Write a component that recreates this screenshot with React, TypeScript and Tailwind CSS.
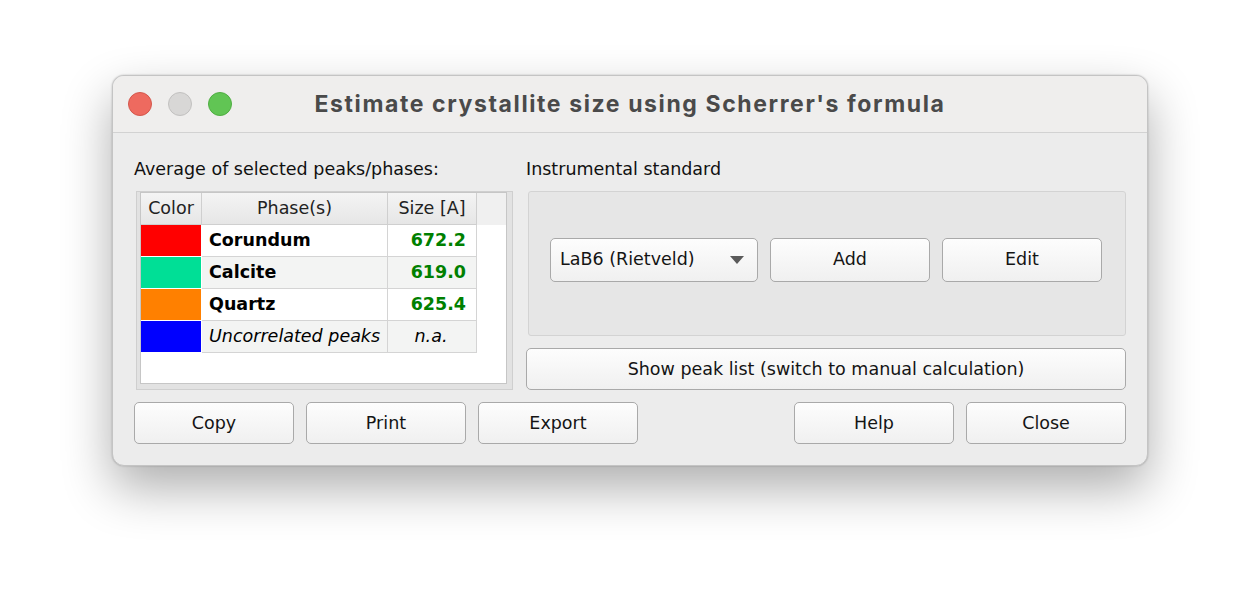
import React from "react";

const Btn = ({ children, className = "" }: { children: React.ReactNode; className?: string }) => (
  <div
    className={
      "shrink-0 flex items-center justify-center rounded-[5px] border border-[#a9a9a9] bg-gradient-to-b from-[#fdfdfd] to-[#f0f0f0] text-[17.5px] text-[#141414] " +
      className
    }
  >
    {children}
  </div>
);

const rows = [
  { color: "bg-[#ff0000]", name: "Corundum", size: "672.2", alt: false },
  { color: "bg-[#00df96]", name: "Calcite", size: "619.0", alt: true },
  { color: "bg-[#ff8000]", name: "Quartz", size: "625.4", alt: false },
  { color: "bg-[#0000ff]", name: "Uncorrelated peaks", size: "n.a.", alt: true, italic: true },
];

export default function App() {
  return (
    <div
      className="w-[1260px] h-[614px] bg-white overflow-hidden pt-[75px] pl-[112px]"
      style={{ fontFamily: '"DejaVu Sans", "Liberation Sans", sans-serif' }}
    >
      <div className="w-[1036px] h-[391px] rounded-[12px] bg-[#ececec] border border-[#c4c4c4] shadow-[0_22px_50px_rgba(0,0,0,0.32),0_0_2px_rgba(0,0,0,0.25)] overflow-hidden flex flex-col">
        {/* title bar */}
        <div className="relative h-[57px] shrink-0 bg-[#efeeed] border-b border-[#d2d2d2] flex items-center">
          <div className="flex gap-[16px] pl-[15px]">
            <div className="w-[24px] h-[24px] rounded-full bg-[#ee6a5f] border border-[#d4574c]" />
            <div className="w-[24px] h-[24px] rounded-full bg-[#d8d7d6] border border-[#c2c1c0]" />
            <div className="w-[24px] h-[24px] rounded-full bg-[#61c554] border border-[#4fae42]" />
          </div>
          <div
            className="absolute inset-0 flex items-center justify-center text-[23px] font-bold tracking-[1.6px] text-[#4a4a4a]"
            style={{ fontFamily: '"Inter", "Liberation Sans", sans-serif' }}
          >
            Estimate crystallite size using Scherrer's formula
          </div>
        </div>

        {/* body */}
        <div className="flex-1 px-[21px] pt-[25px] flex flex-col">
          <div className="flex gap-[13px]">
            {/* left */}
            <div className="w-[379px] shrink-0 flex flex-col">
              <div className="h-[22px] text-[17.5px] leading-[22px] text-[#111] whitespace-nowrap">Average of selected peaks/phases:</div>
              <div className="mt-[11px] ml-[2px] w-[377px] h-[199px] border border-[#cfcfcf] bg-[#e2e2e2] pl-[3px] pr-[5px] pb-[5px]">
                <div className="w-full h-full border border-[#c6c6c6] bg-white text-[17.5px] text-[#000]">
                  {/* header */}
                  <div className="flex h-[32px] bg-[#f0f0f0]">
                    <div className="w-[61px] flex items-center justify-center bg-gradient-to-b from-[#f4f4f4] to-[#e6e6e6] border-r border-b border-[#cfcfcf] text-[#222]">Color</div>
                    <div className="w-[186px] flex items-center justify-center bg-gradient-to-b from-[#f4f4f4] to-[#e6e6e6] border-r border-b border-[#cfcfcf] text-[#222]">Phase(s)</div>
                    <div className="w-[89px] flex items-center justify-center bg-gradient-to-b from-[#f4f4f4] to-[#e6e6e6] border-r border-b border-[#cfcfcf] text-[#222]">Size [A]</div>
                  </div>
                  {rows.map((r) => (
                    <div key={r.name} className="flex h-[32px]">
                      <div className={"w-[61px] border-b border-r border-white " + r.color} />
                      <div
                        className={
                          "w-[186px] flex items-center pl-[7px] border-b border-r border-[#d4d4d4] whitespace-nowrap " +
                          (r.alt ? "bg-[#f3f4f3] " : "bg-white ") +
                          (r.italic ? "italic" : "font-bold")
                        }
                      >
                        {r.name}
                      </div>
                      <div
                        className={
                          "w-[89px] flex items-center border-b border-r border-[#d4d4d4] " +
                          (r.alt ? "bg-[#f3f4f3] " : "bg-white ") +
                          (r.italic ? "italic justify-center pr-[2px]" : "font-bold justify-end pr-[10px] text-[#008000]")
                        }
                      >
                        {r.size}
                      </div>
                    </div>
                  ))}
                </div>
              </div>
            </div>

            {/* right */}
            <div className="w-[600px] shrink-0 flex flex-col">
              <div className="h-[22px] text-[17.5px] leading-[22px] text-[#111]">Instrumental standard</div>
              <div className="mt-[11px] ml-[2px] w-[598px] h-[145px] rounded-[3px] border border-[#d3d3d3] bg-[#e6e6e6] flex items-center gap-[12px] pl-[21px] pb-[8px]">
                <div className="shrink-0 w-[208px] h-[44px] rounded-[5px] border border-[#a9a9a9] bg-gradient-to-b from-[#fdfdfd] to-[#f0f0f0] flex items-center justify-between pl-[9px] pr-[13px] text-[17.5px] text-[#141414]">
                  <span>LaB6 (Rietveld)</span>
                  <svg width="14" height="8" viewBox="0 0 14 8">
                    <path d="M0 0 L14 0 L7 8 Z" fill="#5a5a5a" />
                  </svg>
                </div>
                <Btn className="w-[160px] h-[44px]">Add</Btn>
                <Btn className="w-[160px] h-[44px]">Edit</Btn>
              </div>
              <Btn className="mt-[12px] w-[600px] h-[42px]">Show peak list (switch to manual calculation)</Btn>
            </div>
          </div>

          {/* bottom buttons */}
          <div className="mt-[12px] flex gap-[12px]">
            <Btn className="w-[160px] h-[42px]">Copy</Btn>
            <Btn className="w-[160px] h-[42px]">Print</Btn>
            <Btn className="w-[160px] h-[42px]">Export</Btn>
            <div className="w-[132px] shrink-0" />
            <Btn className="w-[160px] h-[42px]">Help</Btn>
            <Btn className="w-[160px] h-[42px]">Close</Btn>
          </div>
        </div>
      </div>
    </div>
  );
}
